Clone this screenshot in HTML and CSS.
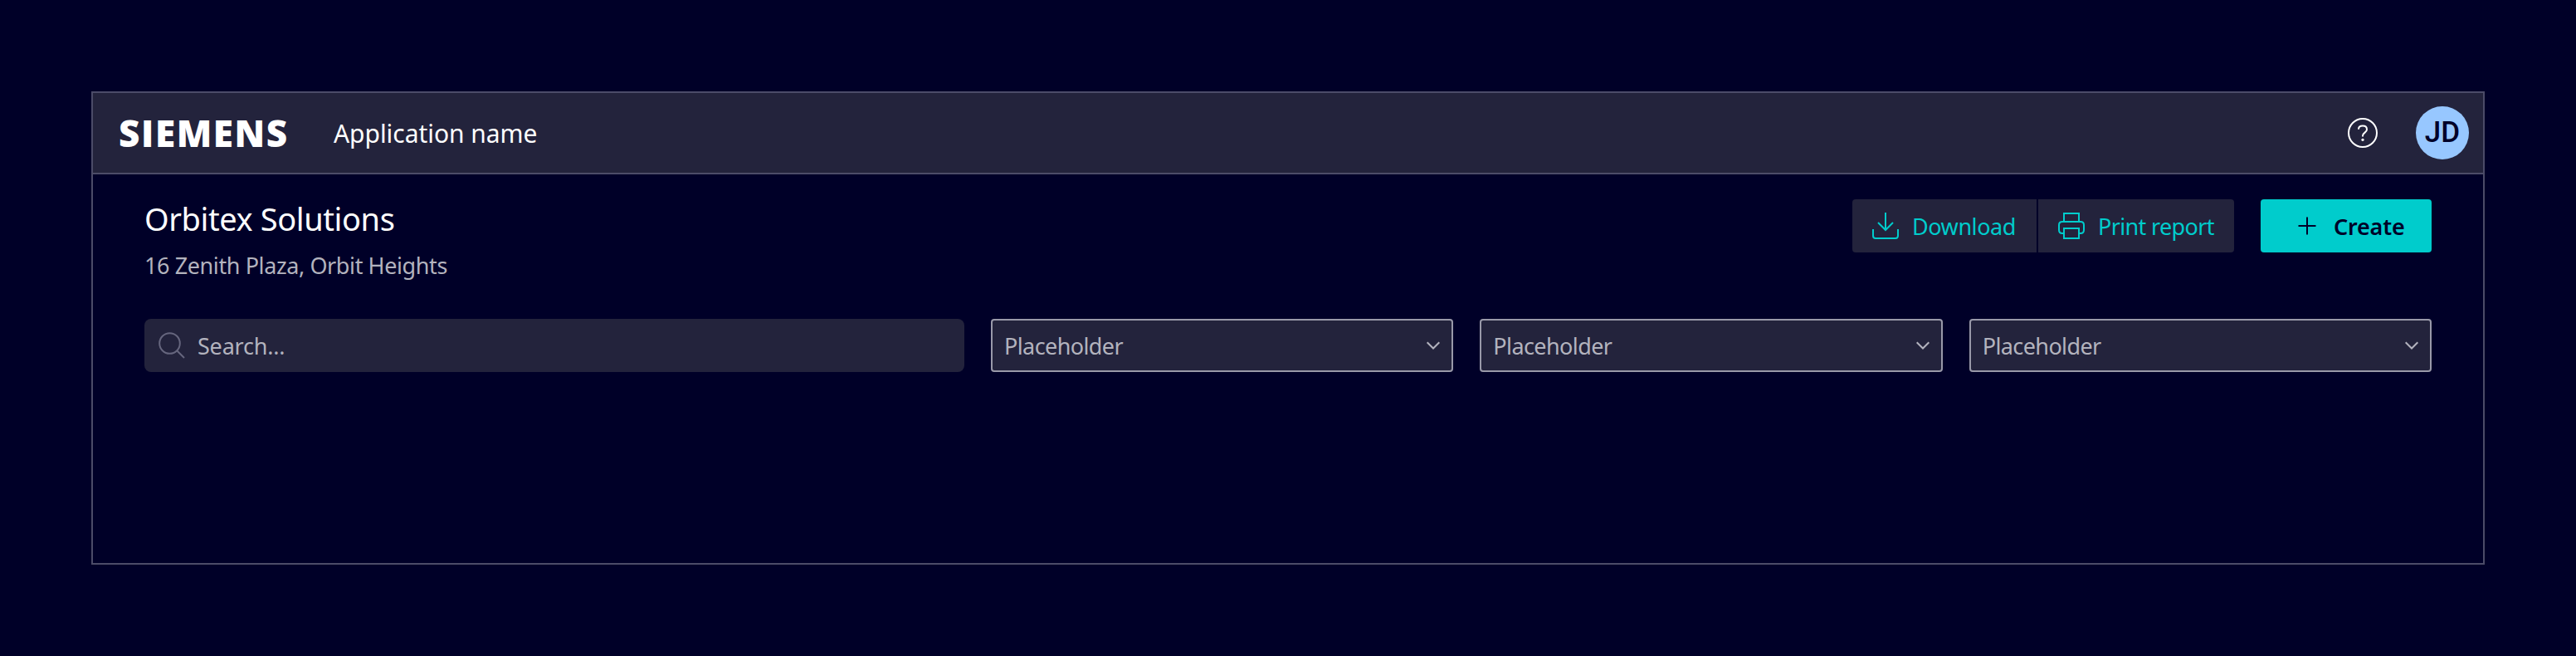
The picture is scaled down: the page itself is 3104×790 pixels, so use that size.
FILE: index.html
```html
<!DOCTYPE html>
<html lang="en">
<head>
<meta charset="utf-8">
<title>Orbitex Solutions</title>
<link rel="stylesheet" href="styles.css">
</head>
<body>
<div class="app">
  <header class="header">
    <span class="logo">SIEMENS</span>
    <span class="app-name">Application name</span>
    <svg class="help" viewBox="0 0 36 36" fill="none" stroke="currentColor" stroke-width="2">
      <circle cx="18" cy="18" r="17"/>
      <path d="M13 13.8V13.5C13 11 15 9.6 18 9.6S23 11.3 23 14C23 17.6 18 17.6 18 21.5V22.5"/>
      <circle cx="18" cy="26.3" r="1.6" fill="currentColor" stroke="none"/>
    </svg>
    <span class="avatar">JD</span>
  </header>
  <main class="content">
    <section class="heading">
      <div class="titles">
        <h1 class="title">Orbitex Solutions</h1>
        <p class="subtitle">16 Zenith Plaza, Orbit Heights</p>
      </div>
      <div class="actions">
        <div class="group">
          <button class="btn secondary download">
            <svg class="icon" viewBox="0 0 32 32" fill="none" stroke="currentColor" stroke-width="2"><path d="M16 0V21M7 12L16 21L25 12M1 20V28Q1 31 4 31H28Q31 31 31 28V20"/></svg>
            <span>Download</span>
          </button>
          <button class="btn secondary print">
            <svg class="icon" viewBox="0 0 32 32" fill="none" stroke="currentColor" stroke-width="2"><path d="M7 11V1H25V11M7 25H5Q1 25 1 21V15Q1 11 5 11H27Q31 11 31 15V21Q31 25 27 25H25M7 19H25V31H7Z"/></svg>
            <span>Print report</span>
          </button>
        </div>
        <button class="btn primary">
          <svg class="plus" viewBox="0 0 22 22" fill="none" stroke="currentColor" stroke-width="2"><path d="M11 .5V21.5M.5 11H21.5"/></svg>
          <span>Create</span>
        </button>
      </div>
    </section>
    <section class="filters">
      <div class="search">
        <svg class="search-icon" viewBox="0 0 32 32" fill="none" stroke="currentColor" stroke-width="2"><circle cx="13.5" cy="13.5" r="12.3"/><path d="M22.2 22.2L31 31"/></svg>
        <span>Search...</span>
      </div>
      <div class="select"><span>Placeholder</span><svg class="chevron" viewBox="0 0 16 10" fill="none" stroke="currentColor" stroke-width="2"><path d="M.7 1.2L8 8.5L15.3 1.2"/></svg></div>
      <div class="select"><span>Placeholder</span><svg class="chevron" viewBox="0 0 16 10" fill="none" stroke="currentColor" stroke-width="2"><path d="M.7 1.2L8 8.5L15.3 1.2"/></svg></div>
      <div class="select"><span>Placeholder</span><svg class="chevron" viewBox="0 0 16 10" fill="none" stroke="currentColor" stroke-width="2"><path d="M.7 1.2L8 8.5L15.3 1.2"/></svg></div>
    </section>
  </main>
</div>
</body>
</html>
```
FILE: styles.css
```css
* { box-sizing: border-box; }
body {
  margin: 0;
  height: 790px;
  padding: 110px;
  background: #000028;
  color: #fff;
  font-family: "Noto Sans", "Open Sans", sans-serif;
  font-size: 27px;
  font-weight: 400;
  overflow: hidden;
}
svg { display: block; flex: none; }
.app { height: 570px; border: 2px solid #4c4c68; }
.header {
  display: flex;
  align-items: center;
  height: 98px;
  padding: 0 17px 0 31px;
  background: #23233c;
  border-bottom: 2px solid #4c4c68;
}
.logo {
  width: 259px;
  font-family: "Open Sans", sans-serif;
  font-size: 44px;
  font-weight: 800;
  line-height: 95px;
  letter-spacing: 1.6px;
  white-space: nowrap;
}
.app-name { flex: 1; font-size: 30px; line-height: 97px; letter-spacing: -.05px; white-space: nowrap; }
.help { width: 36px; height: 36px; margin-right: 46px; }
.avatar {
  width: 64px;
  height: 64px;
  border-radius: 50%;
  background: #97c7ff;
  color: #000028;
  font-family: Roboto, sans-serif;
  font-size: 35px;
  font-weight: 500;
  line-height: 64px;
  text-align: center;
}
.content { padding: 30px 62px 0; }
.heading { display: flex; justify-content: space-between; height: 144px; }
.title { margin: 0; font-size: 38px; font-weight: inherit; line-height: 46px; letter-spacing: -.4px; }
.subtitle { margin: 12px 0 0; line-height: 44px; color: #b3b3be; letter-spacing: -.4px; }
.actions { display: flex; gap: 32px; height: 64px; }
.group { display: flex; gap: 2px; }
.btn {
  display: flex;
  align-items: center;
  gap: 16px;
  height: 64px;
  padding: 0 0 0 24px;
  border: 0;
  font: inherit;
  line-height: 63px;
  white-space: nowrap;
}
.secondary { background: #23233c; color: #00cccc; }
.download { width: 222px; border-radius: 4px 0 0 4px; letter-spacing: -.45px; }
.print { width: 236px; border-radius: 0 4px 4px 0; letter-spacing: -.65px; }
.icon { width: 32px; height: 32px; }
.primary {
  width: 206px;
  padding-left: 45px;
  gap: 21px;
  border-radius: 4px;
  background: #00cccc;
  color: #000028;
  font-weight: 600;
  letter-spacing: -.2px;
}
.plus { width: 22px; height: 22px; }
.filters { display: flex; gap: 32px; color: #b3b3be; line-height: 63px; }
.search {
  display: flex;
  align-items: center;
  width: 988px;
  height: 64px;
  padding-left: 17px;
  gap: 15px;
  border-radius: 8px;
  background: #23233c;
  letter-spacing: -.2px;
}
.search-icon { width: 32px; height: 32px; color: #66667e; }
.select {
  flex: 1;
  display: flex;
  align-items: center;
  justify-content: space-between;
  height: 64px;
  padding: 0 14px;
  border: 2px solid #9999a9;
  border-radius: 4px;
  background: #23233c;
  letter-spacing: -.6px;
}
.chevron { width: 16px; height: 10px; }
```
